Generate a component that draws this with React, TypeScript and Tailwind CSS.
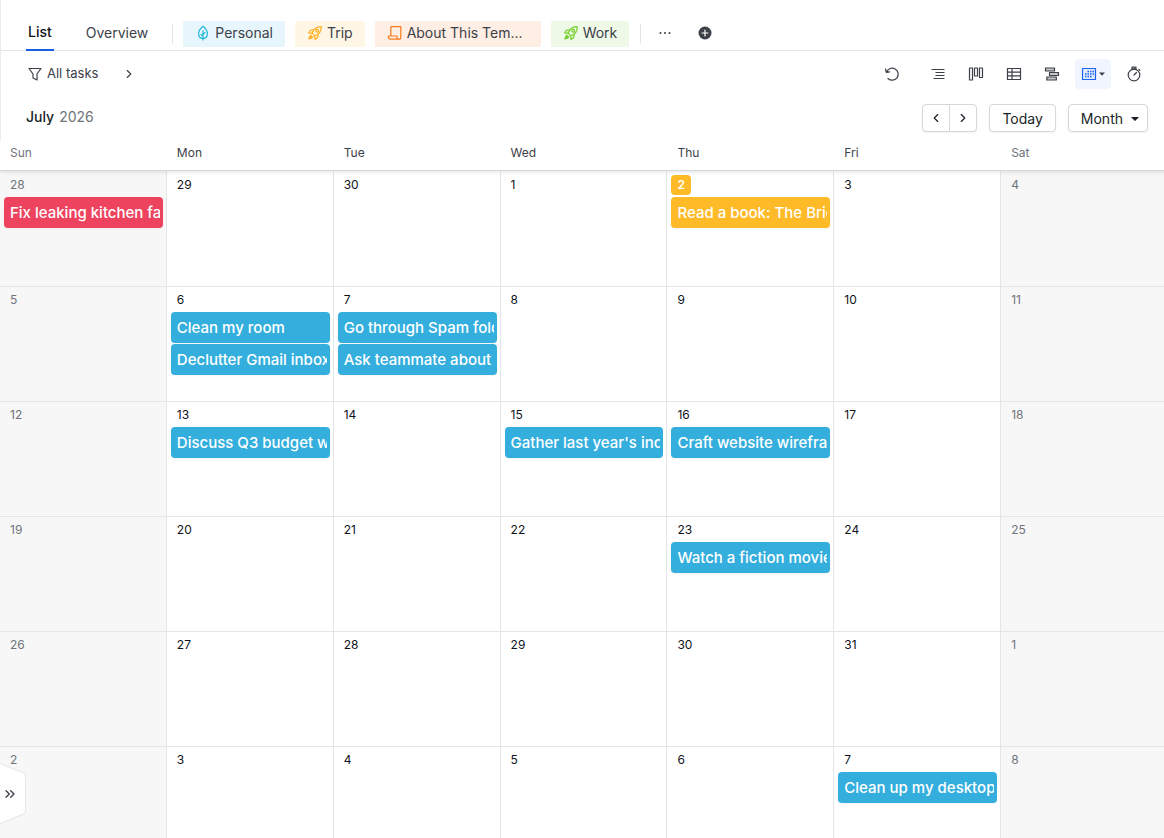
import React, { useState } from "react";
import clsx from "clsx";
import { ChevronLeft, ChevronRight, ChevronsRight } from "lucide-react";

type Task = { title: string; color: "red" | "yellow" | "blue" };
type Day = { id: string; label: number; muted?: boolean; today?: boolean; tasks?: Task[] };

const weekDays = ["Sun", "Mon", "Tue", "Wed", "Thu", "Fri", "Sat"];

const taskColors = {
  red: "bg-[#ed435f]",
  yellow: "bg-[#ffba28]",
  blue: "bg-[#34aedd]",
};

// Tasks keyed by "week-weekday"
const tasks: Record<string, Task[]> = {
  "0-0": [{ title: "Fix leaking kitchen faucet", color: "red" }],
  "0-4": [{ title: "Read a book: The Bright Side", color: "yellow" }],
  "1-1": [
    { title: "Clean my room", color: "blue" },
    { title: "Declutter Gmail inbox", color: "blue" },
  ],
  "1-2": [
    { title: "Go through Spam folder", color: "blue" },
    { title: "Ask teammate about", color: "blue" },
  ],
  "2-1": [{ title: "Discuss Q3 budget with", color: "blue" }],
  "2-3": [{ title: "Gather last year's income", color: "blue" }],
  "2-4": [{ title: "Craft website wireframe", color: "blue" }],
  "3-4": [{ title: "Watch a fiction movie", color: "blue" }],
  "5-5": [{ title: "Clean up my desktop", color: "blue" }],
};

const firstDay = new Date(2026, 5, 28);

const weeks: Day[][] = Array.from({ length: 6 }, (_, week) =>
  weekDays.map((_, i) => {
    const date = new Date(firstDay);
    date.setDate(firstDay.getDate() + week * 7 + i);
    const id = `${week}-${i}`;
    return {
      id,
      label: date.getDate(),
      muted: i === 0 || i === 6,
      today: date.getMonth() === 6 && date.getDate() === 2,
      tasks: tasks[id],
    };
  })
);

const Icon: React.FC<{ children: React.ReactNode; className?: string }> = ({ children, className }) => (
  <svg
    viewBox="0 0 16 16"
    className={clsx("size-4 shrink-0", className)}
    fill="none"
    stroke="currentColor"
    strokeWidth="1.2"
    strokeLinecap="round"
    strokeLinejoin="round"
    aria-hidden="true"
  >
    {children}
  </svg>
);

const LeafIcon = () => (
  <Icon className="text-[#1fb6d8]">
    <path d="M8 1.2C5.2 3.6 3.6 6 3.6 8.8c0 2.8 1.8 4.6 4.4 4.6s4.4-1.8 4.4-4.6C12.4 6 10.8 3.6 8 1.2z" />
    <path d="M8 5.5V15M8 9.2l2-1.5M8 11.2 6 9.5" />
  </Icon>
);

const RocketIcon = ({ className }: { className: string }) => (
  <Icon className={className}>
    <path d="M5.2 8.2C6.5 4.3 9.5 1.6 14.3 1.7c.1 4.8-2.6 7.8-6.5 9.1z" />
    <circle cx="10.2" cy="5.8" r="1.4" />
    <path d="M6.5 5 3.6 5.2 1.6 8l3.6.2M11 9.5l-.2 2.9L8 14.4l-.2-3.6" />
    <path d="M4.2 10c-1.3.5-2 1.8-2.3 4 2.2-.2 3.5-1 4-2.3M4.8 11.2l-1.3 1.3" />
  </Icon>
);

const ScrollIcon = () => (
  <Icon className="text-[#fa7a1e]">
    <path d="M3.8 11V1.7h10v10.5a2 2 0 0 1-2 2H3.3c-1.200 0-1.8-.9-1.8-2V11H10v1.5c0 1 .7 1.7 1.8 1.7" />
  </Icon>
);

const FilterIcon = () => (
  <Icon>
    <path d="M2 2.5h12L10 8v6l-4-2V8z" />
  </Icon>
);

const Caret = ({ className }: { className?: string }) => (
  <svg viewBox="0 0 8 4" className={clsx("h-1 shrink-0", className)} fill="currentColor" aria-hidden="true">
    <path d="M0 0h8L4.6 3.6a.8.8 0 0 1-1.2 0z" />
  </svg>
);

const viewIcons = [
  {
    name: "List view",
    icon: <path d="M1.5 3.5h13M5.5 6.5h9M5.5 9.5h9M3.5 12.5h11" strokeLinecap="butt" />,
  },
  {
    name: "Board view",
    icon: <path d="M1.5 2h3v12h-3zM6.5 2h3v8h-3zM11.5 2h3v9.5h-3z" />,
  },
  {
    name: "Table view",
    icon: <path d="M1.5 2.5h13v11h-13zM1.5 6.2h13M1.5 9.8h13M6 2.5v11" />,
  },
  {
    name: "Timeline view",
    icon: <path d="M1.5 2h9v3h-9zM5.5 6.5h9v3h-9zM2.800 11h9.500v3H2.800z" fill="currentColor" fillOpacity="0.3" />,
  },
];

const lists = [
  { name: "Personal", bg: "bg-[#e6f6fc]", icon: <LeafIcon /> },
  { name: "Trip", bg: "bg-[#fff6e5]", icon: <RocketIcon className="text-[#ffb020]" /> },
  { name: "About This Tem...", bg: "w-[166px] bg-[#ffeee4]", icon: <ScrollIcon /> },
  { name: "Work", bg: "bg-[#eff9e7]", icon: <RocketIcon className="text-[#75cf2b]" /> },
];

const TopTabs = () => (
  <nav className="flex h-[51px] items-end border-b border-[#e4e5e6] pl-[25px] text-sm text-[#3c4149]">
    <a
      href="#list"
      className="-mb-px flex h-9 items-center border-b-2 border-[#1560e0] px-0.5 font-medium text-[#0f131a]"
    >
      List
    </a>
    <a href="#overview" className="ml-8 flex h-[34px] items-center">
      Overview
    </a>
    <div className="ml-6 flex h-8 items-center gap-2.5">
      <span className="h-5 w-px bg-[#e4e5e6]" />
      {lists.map((list) => (
        <a
          key={list.name}
          href="#list"
          className={clsx("flex h-[26px] items-center gap-1 rounded-xs px-3 pb-0.5", list.bg)}
        >
          {list.icon}
          {list.name}
        </a>
      ))}
      <span className="ml-px h-5 w-px bg-[#e4e5e6]" />
      <button aria-label="More" className="flex size-7 items-center justify-center pb-0.5">
        <Icon>
          <path d="M3.5 8h.01M8 8h.01M12.5 8h.01" strokeWidth="2" />
        </Icon>
      </button>
      <button aria-label="Add list" className="ml-0.5 flex size-7 items-center justify-center pb-0.5">
        <Icon>
          <circle cx="8" cy="8" r="6.5" fill="currentColor" stroke="none" />
          <path d="M8 5v6M5 8h6" stroke="white" />
        </Icon>
      </button>
    </div>
  </nav>
);

const Toolbar = () => (
  <div className="flex h-[45px] items-center justify-between pr-3.5 pl-[26px] text-[#3c4149]">
    <div className="flex items-center">
      <button className="flex items-center gap-1 text-[13px]">
        <FilterIcon />
        All tasks
      </button>
      <button aria-label="Expand filters" className="ml-6">
        <ChevronRight className="size-3.5" />
      </button>
    </div>
    <div className="flex items-center gap-1.5">
      <button aria-label="Refresh" className="mr-2 flex size-8 items-center justify-center">
        <Icon>
          <path d="M2.6 6A6 6 0 1 1 4 12.5M1.5 3l.8 3.4 3.4-.6" />
        </Icon>
      </button>
      {viewIcons.map((view) => (
        <button key={view.name} aria-label={view.name} className="flex size-8 items-center justify-center">
          <Icon>{view.icon}</Icon>
        </button>
      ))}
      <button
        aria-label="Calendar view"
        className="mx-px flex h-[30px] w-9 items-center justify-center gap-0.5 rounded-sm bg-[#f0f5ff]"
      >
        <Icon className="text-[#1c64f2]">
          <path d="M1.5 2.5h13v11h-13z" fill="currentColor" fillOpacity="0.08" />
          <path
            d="M6.5 5.5H8M9 5.5h1.500M11.5 5.5H13M4 8h1.5M6.5 8H8M9 8h1.5M11.5 8H13M4 10.5h1.5M6.5 10.5H8M9 10.5h1.5"
            strokeWidth="1.5"
            strokeLinecap="butt"
          />
        </Icon>
        <Caret className="w-1.5" />
      </button>
      <button aria-label="Timer" className="flex size-8 items-center justify-center">
        <Icon>
          <circle cx="8" cy="9" r="5.8" />
          <path d="M6 1.2h4v1.6H6zM8 9l2.5-2.5M13 3.5l.8.8" />
        </Icon>
      </button>
    </div>
  </div>
);

const MonthBar = () => {
  const button = "flex h-7 items-center rounded-sm border border-[#d5d7da] bg-white shadow-xs";

  return (
    <div className="flex h-[44px] items-center justify-between pr-4 pl-[25px] text-sm text-[#1a1f27]">
      <h1 className="flex gap-[5px] pb-0.5 font-medium">
        July <span className="font-normal text-[#6f747b]">2026</span>
      </h1>
      <div className="flex gap-3">
        <div className={button}>
          <button aria-label="Previous month" className="flex h-full w-[26px] items-center justify-center">
            <ChevronLeft className="size-3.5" />
          </button>
          <button
            aria-label="Next month"
            className="flex h-full w-[27px] items-center justify-center border-l border-[#d5d7da]"
          >
            <ChevronRight className="size-3.5" />
          </button>
        </div>
        <button className={clsx(button, "px-3 pt-0.5")}>Today</button>
        <button className={clsx(button, "gap-2 pt-0.5 pr-2 pl-3")}>
          Month
          <Caret className="w-2" />
        </button>
      </div>
    </div>
  );
};

const DayCell: React.FC<{ day: Day; first: boolean }> = ({ day, first }) => (
  <td
    className={clsx(
      "h-[115px] min-w-0 border-t border-r border-r-[#e4e5e6] pt-[3px] pr-[3px] pl-1 text-xs",
      first ? "border-t-transparent" : "border-t-[#e4e5e6]",
      day.muted ? "bg-[#f7f7f7] text-[#6f747b]" : "text-[#0f131a]"
    )}
  >
    <span
      className={clsx(
        "flex h-5 w-fit items-center px-1.5",
        day.today && "rounded-sm bg-[#ffba28] font-semibold text-white"
      )}
    >
      {day.label}
    </span>
    <div className="mt-0.5 flex flex-col gap-px">
      {day.tasks?.map((task) => (
        <a
          key={task.title}
          href="#task"
          className={clsx(
            "block h-[31px] rounded-sm pr-[3px] pl-1.5 text-[15px] leading-[31px] font-medium text-white shadow-xs",
            taskColors[task.color]
          )}
        >
          <span className="block overflow-hidden whitespace-nowrap">{task.title}</span>
        </a>
      ))}
    </div>
  </td>
);

const Calendar = () => (
  <table className="-mr-1 block">
    <thead className="relative block border-b border-[#d5d7da] shadow-[0_2px_3px_rgba(0,0,0,0.08)]">
      <tr className="grid h-[30px] grid-cols-7">
        {weekDays.map((day, i) => (
          <th
            key={day}
            className={clsx(
              "pt-[5px] pl-2.5 text-left text-xs font-normal",
              i === 0 || i === 6 ? "text-[#6f747b]" : "text-[#3c4149]"
            )}
          >
            {day}
          </th>
        ))}
      </tr>
    </thead>
    <tbody className="block">
      {weeks.map((week, i) => (
        <tr key={week[0].id} className="grid grid-cols-7">
          {week.map((day) => (
            <DayCell key={day.id} day={day} first={i === 0} />
          ))}
        </tr>
      ))}
    </tbody>
  </table>
);

const App: React.FC = () => {
  const [open, setOpen] = useState(false);

  return (
    <div className="relative h-screen overflow-hidden bg-white font-['Inter',sans-serif]">
      <header className="border-l border-[#ececed]">
        <TopTabs />
        <Toolbar />
        <MonthBar />
      </header>
      <Calendar />

      {/* Sidebar handle */}
      <button
        aria-label="Open sidebar"
        aria-expanded={open}
        onClick={() => setOpen(!open)}
        className="absolute bottom-[13px] left-0 flex h-[62px] w-[26px] items-center text-[#3c4149]"
      >
        <svg viewBox="0 0 26 62" className="absolute inset-0" fill="white" stroke="#e4e5e6" aria-hidden="true">
          <path d="M0 .5 22.5 9.5q3 1.3 3 4v34q0 2.7-3 4L0 60.5" />
        </svg>
        <ChevronsRight className="relative ml-0.5 size-4" />
      </button>
    </div>
  );
};

export default App;
